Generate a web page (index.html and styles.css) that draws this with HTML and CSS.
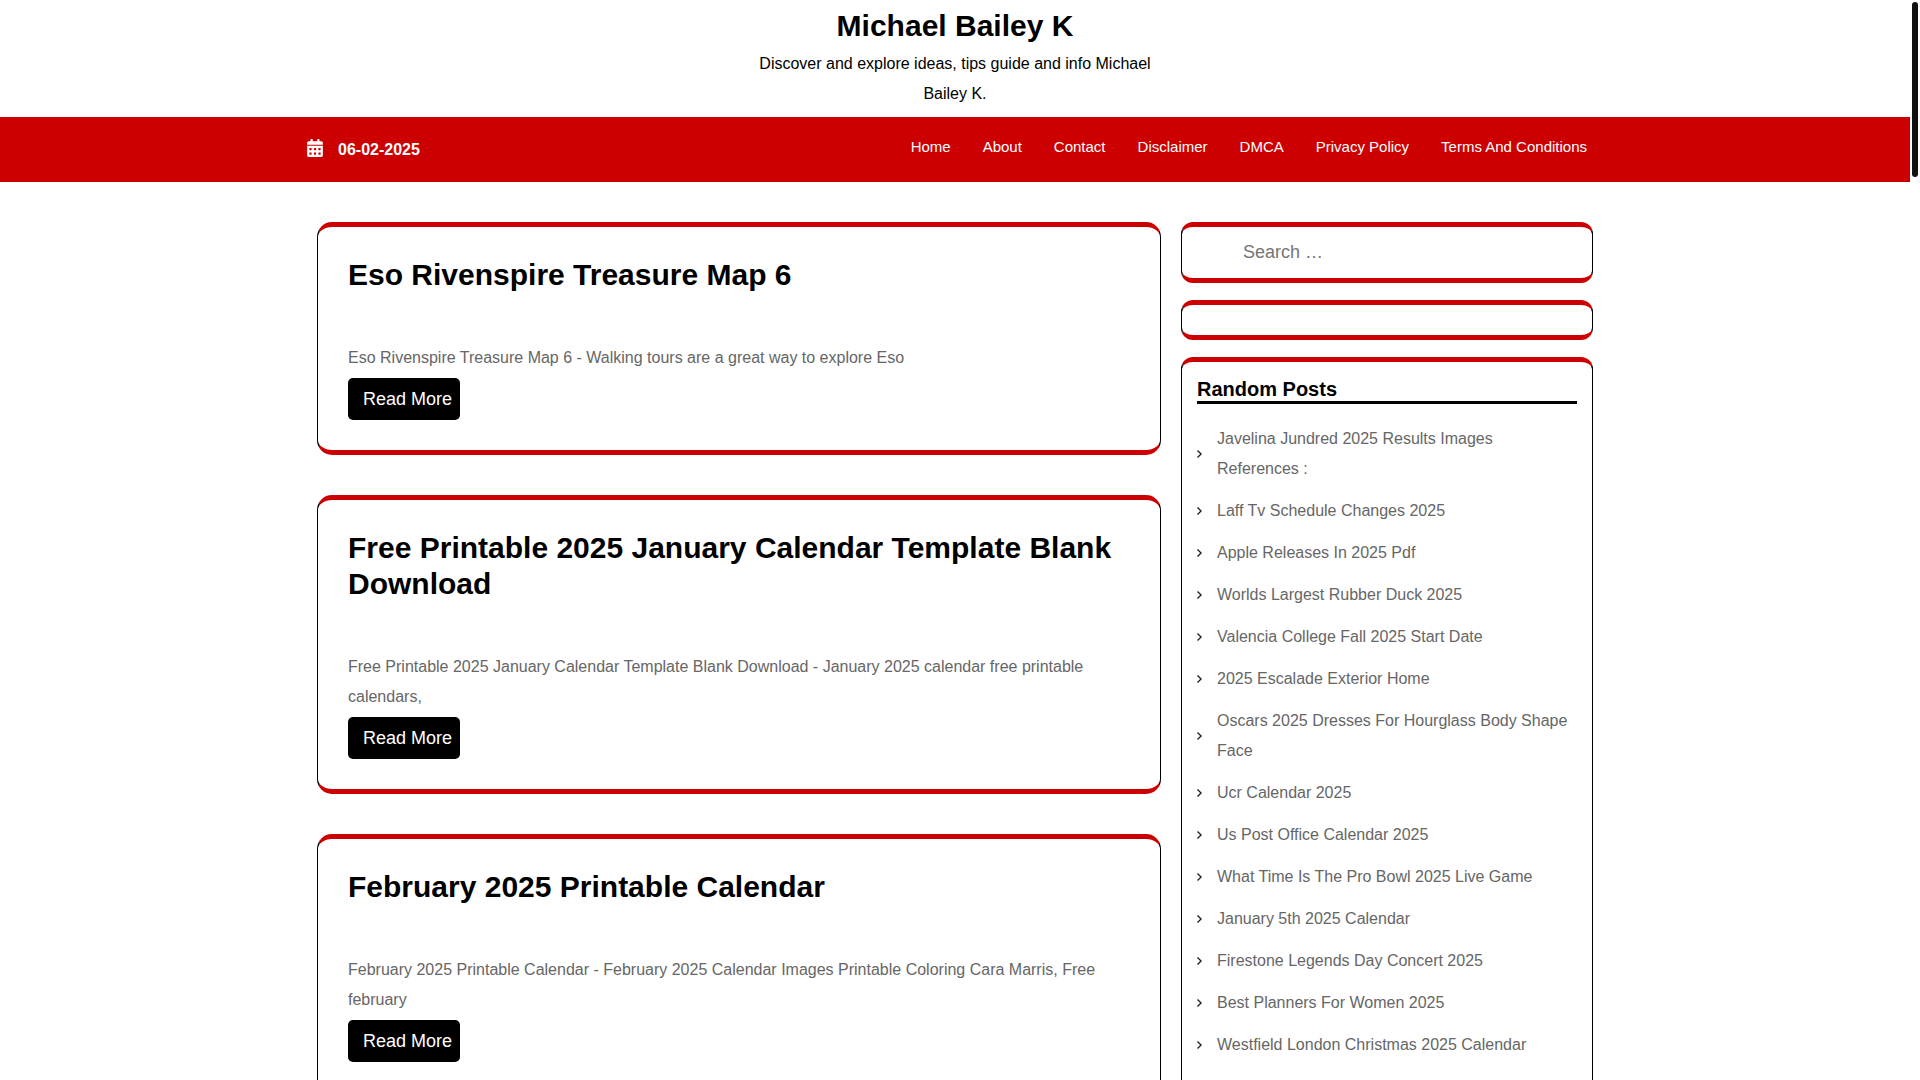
FILE: index.html
```html
<!DOCTYPE html>
<html lang="en">

<head>
  <meta charset="UTF-8">
  <meta name="viewport" content="width=device-width, initial-scale=1.0">
  <title>Michael Bailey K</title>
  <link rel="stylesheet" href="styles.css">
</head>

<body>
  <header>
    <div class="branding">
      <h1><a href="#">Michael Bailey K</a></h1>
      <p>Discover and explore ideas, tips guide and info Michael Bailey K.</p>
    </div>
    <div class="menubar">
      <div class="container menubar-inner">
        <div class="date">
          <svg class="date-icon" viewBox="0 0 448 512" aria-hidden="true">
            <path fill="currentColor" fill-rule="evenodd" d="M0 464c0 26.500 21.500 48 48 48h352c26.500 0 48-21.500 48-48V192H0v272zM320 268c0-6.600 5.400-12 12-12h40c6.600 0 12 5.400 12 12v40c0 6.600-5.400 12-12 12h-40c-6.600 0-12-5.400-12-12v-40zm0 128c0-6.600 5.400-12 12-12h40c6.600 0 12 5.400 12 12v40c0 6.600-5.400 12-12 12h-40c-6.600 0-12-5.400-12-12v-40zM192 268c0-6.600 5.400-12 12-12h40c6.600 0 12 5.400 12 12v40c0 6.600-5.400 12-12 12h-40c-6.600 0-12-5.400-12-12v-40zm0 128c0-6.600 5.400-12 12-12h40c6.600 0 12 5.400 12 12v40c0 6.600-5.400 12-12 12h-40c-6.600 0-12-5.400-12-12v-40zM64 268c0-6.600 5.400-12 12-12h40c6.600 0 12 5.400 12 12v40c0 6.600-5.400 12-12 12H76c-6.600 0-12-5.400-12-12v-40zm0 128c0-6.600 5.400-12 12-12h40c6.600 0 12 5.400 12 12v40c0 6.600-5.400 12-12 12H76c-6.600 0-12-5.400-12-12v-40zM400 64h-48V16c0-8.800-7.200-16-16-16h-32c-8.800 0-16 7.200-16 16v48H160V16c0-8.800-7.200-16-16-16h-32c-8.800 0-16 7.200-16 16v48H48C21.500 64 0 85.500 0 112v48h448v-48c0-26.500-21.500-48-48-48z"/>
          </svg>
          <span>06-02-2025</span>
        </div>
        <nav aria-label="Primary">
          <ul class="menu">
            <li><a href="#">Home</a></li>
            <li><a href="#">About</a></li>
            <li><a href="#">Contact</a></li>
            <li><a href="#">Disclaimer</a></li>
            <li><a href="#">DMCA</a></li>
            <li><a href="#">Privacy Policy</a></li>
            <li><a href="#">Terms And Conditions</a></li>
          </ul>
        </nav>
      </div>
    </div>
  </header>

  <div class="container content">
    <main class="posts">
      <article class="post">
        <h2><a href="#">Eso Rivenspire Treasure Map 6</a></h2>
        <p>Eso Rivenspire Treasure Map 6 - Walking tours are a great way to explore Eso</p>
        <a class="read-more" href="#">Read More</a>
      </article>
      <article class="post">
        <h2><a href="#">Free Printable 2025 January Calendar Template Blank Download</a></h2>
        <p>Free Printable 2025 January Calendar Template Blank Download - January 2025 calendar free printable calendars,</p>
        <a class="read-more" href="#">Read More</a>
      </article>
      <article class="post">
        <h2><a href="#">February 2025 Printable Calendar</a></h2>
        <p>February 2025 Printable Calendar - February 2025 Calendar Images Printable Coloring Cara Marris, Free february</p>
        <a class="read-more" href="#">Read More</a>
      </article>
    </main>

    <aside class="sidebar">
      <form class="widget widget-search" role="search">
        <input type="search" placeholder="Search …" aria-label="Search for:">
      </form>
      <div class="widget"></div>
      <section class="widget widget-posts">
        <h3>Random Posts</h3>
        <ul class="post-list">
          <li><a href="#">Javelina Jundred 2025 Results Images References :</a></li>
          <li><a href="#">Laff Tv Schedule Changes 2025</a></li>
          <li><a href="#">Apple Releases In 2025 Pdf</a></li>
          <li><a href="#">Worlds Largest Rubber Duck 2025</a></li>
          <li><a href="#">Valencia College Fall 2025 Start Date</a></li>
          <li><a href="#">2025 Escalade Exterior Home</a></li>
          <li><a href="#">Oscars 2025 Dresses For Hourglass Body Shape Face</a></li>
          <li><a href="#">Ucr Calendar 2025</a></li>
          <li><a href="#">Us Post Office Calendar 2025</a></li>
          <li><a href="#">What Time Is The Pro Bowl 2025 Live Game</a></li>
          <li><a href="#">January 5th 2025 Calendar</a></li>
          <li><a href="#">Firestone Legends Day Concert 2025</a></li>
          <li><a href="#">Best Planners For Women 2025</a></li>
          <li><a href="#">Westfield London Christmas 2025 Calendar</a></li>
        </ul>
      </section>
    </aside>
  </div>

  <div class="scroll-thumb"></div>
</body>

</html>
```

FILE: styles.css
```css
* {
  box-sizing: border-box;
}

body {
  margin: 0;
  padding-right: 10px;
  height: 100vh;
  overflow: hidden;
  background: #fff;
  color: #666;
  font-family: "Liberation Sans", Arial, sans-serif;
  font-size: 16px;
  line-height: 30px;
}

h1,
h2,
h3,
p,
ul {
  margin: 0;
  padding: 0;
}

ul {
  list-style: none;
}

a {
  color: inherit;
  text-decoration: none;
}

.container {
  max-width: 1320px;
  margin: 0 auto;
  padding: 0 12px;
}

/* Header */
.branding {
  max-width: 408px;
  margin: 0 auto;
  padding: 8px 0;
  text-align: center;
  color: #000;
}

.branding h1 {
  margin-bottom: 5px;
  font-size: 30px;
  line-height: 36px;
}

.menubar {
  background: #c00;
  color: #fff;
}

.menubar-inner {
  display: flex;
  justify-content: space-between;
  align-items: flex-start;
  padding-top: 15px;
  padding-bottom: 17px;
}

.date {
  display: flex;
  align-items: center;
  gap: 15px;
  padding-top: 3px;
  font-weight: bold;
}

.date-icon {
  width: 16px;
  height: 18px;
  margin-bottom: 4px;
}

.menu {
  display: flex;
  flex-wrap: wrap;
  font-size: 15px;
}

.menu a {
  display: block;
  padding: 0 16px;
}

/* Posts and sidebar */
.content {
  display: grid;
  grid-template-columns: 2fr 1fr;
  align-items: start;
  padding-top: 40px;
}

.posts {
  display: flex;
  flex-direction: column;
  gap: 40px;
  padding: 0 10px;
}

.post,
.widget {
  border: 1px solid #000;
  border-top: 5px solid #c00;
  border-bottom: 5px solid #c00;
  border-radius: 15px;
}

.post {
  padding: 30px;
}

.post h2 {
  margin-bottom: 50px;
  color: #000;
  font-size: 30px;
  line-height: 36px;
}

.post p {
  margin-bottom: 5px;
}

.read-more {
  display: block;
  width: fit-content;
  padding: 6px 8px 6px 15px;
  border-radius: 5px;
  background: #000;
  color: #fff;
  font-size: 18px;
}

.sidebar {
  display: flex;
  flex-direction: column;
  gap: 17px;
  padding: 0 10px;
}

.widget {
  padding: 15px;
  border-radius: 12px;
}

.widget-search {
  padding: 10px 15px;
}

.widget-posts {
  padding-bottom: 30px;
}

.widget-search input {
  display: block;
  width: 100%;
  height: 31px;
  padding: 0 15px 0 46px;
  border: 0;
  outline: 0;
  background: none;
  font-family: inherit;
  font-size: 18px;
}

.widget-search input::placeholder {
  color: #757575;
}

.widget h3 {
  margin-bottom: 14px;
  border-bottom: 3px solid #000;
  color: #000;
  font-size: 20px;
  line-height: 24px;
}

.post-list li {
  display: flex;
  align-items: center;
  gap: 15px;
  padding: 6px 0;
}

/* small chevron in front of each link */
.post-list li::before {
  content: "";
  flex: none;
  width: 5px;
  height: 8px;
  background: #222;
  clip-path: polygon(0 12%, 20% 0, 100% 50%, 20% 100%, 0 88%, 62% 50%);
}

.scroll-thumb {
  position: fixed;
  top: 2px;
  right: 2px;
  width: 6px;
  height: 175px;
  border-radius: 3px;
  background: #0f1010;
}
```
